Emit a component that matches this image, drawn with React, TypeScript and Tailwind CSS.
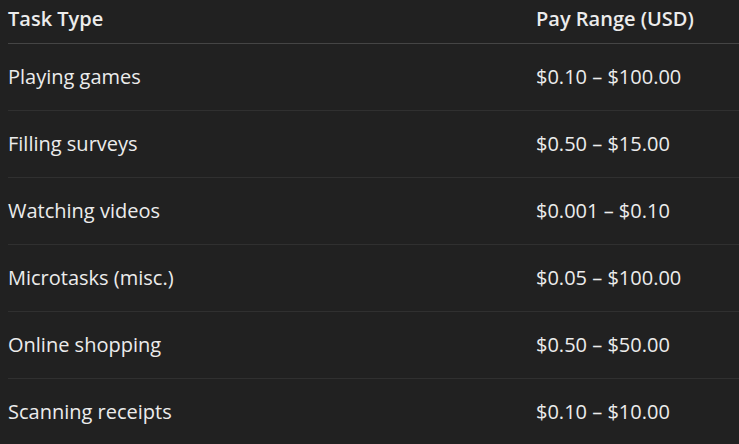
const rows = [
  ["Playing games", "$0.10 – $100.00"],
  ["Filling surveys", "$0.50 – $15.00"],
  ["Watching videos", "$0.001 – $0.10"],
  ["Microtasks (misc.)", "$0.05 – $100.00"],
  ["Online shopping", "$0.50 – $50.00"],
  ["Scanning receipts", "$0.10 – $10.00"],
];

export default function App() {
  return (
    <div className="min-h-screen w-full bg-[#212121] pl-2 text-[#ececec] font-['Open_Sans',sans-serif]">
      <table className="w-full border-collapse text-left text-[20px]">
        <thead>
          <tr className="h-[43px] border-b border-[#454545]">
            <th className="w-[528px] p-0 pb-1 font-semibold">Task Type</th>
            <th className="p-0 pb-1 font-semibold">Pay Range (USD)</th>
          </tr>
        </thead>
        <tbody>
          {rows.map(([task, pay], i) => (
            <tr key={task} className={i < rows.length - 1 ? "h-[67px] border-b border-[#303030]" : "h-[67px]"}>
              <td className="p-0">{task}</td>
              <td className="p-0">{pay}</td>
            </tr>
          ))}
        </tbody>
      </table>
    </div>
  );
}
